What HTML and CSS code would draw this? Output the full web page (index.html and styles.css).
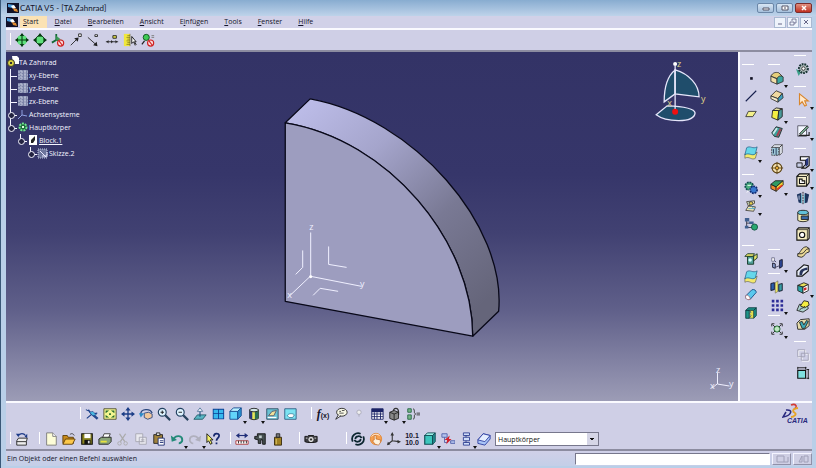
FILE: index.html
```
<!DOCTYPE html>
<html lang="de">
<head>
<meta charset="utf-8">
<meta name="viewport" content="width=device-width, initial-scale=1">
<title>CATIA V5 - [TA Zahnrad]</title>
<link rel="stylesheet" href="styles.css">
</head>
<body>
<svg class="sprite" aria-hidden="true">
  <!-- window -->
  <symbol id="app" viewBox="0 0 12 10"><path fill="#101028" d="M0 0h12v10H0z"/><path fill="#4d9fe0" d="M1 1l6 1-2 3-4-1z"/><path fill="#fff" d="M4 3l3-1 2 3-3 1z"/><path fill="#e08a30" d="M6 5l4 1 1 3-4-1z"/></symbol>
  <!-- view tools, top -->
  <symbol id="move4" viewBox="0 0 16 16"><circle cx="8" cy="8" r="6" fill="#5fe07c"/><path d="M8 1v14M1 8h14" stroke="#053a10" stroke-width="1.200"/><path fill="#053a10" d="M8 0l2.500 3.500h-5zM8 16l2.500-3.500h-5zM0 8l3.500-2.500v5zM16 8l-3.500-2.500v5z"/></symbol>
  <symbol id="rot4" viewBox="0 0 16 16"><circle cx="8" cy="8" r="5" fill="#5fe07c" stroke="#053a10"/><path fill="#053a10" d="M8 0l3 4H5zM8 16l3-4H5zM0 8l4-3v6zM16 8l-4-3v6z"/></symbol>
  <symbol id="axisno" viewBox="0 0 16 16"><path d="M6 1v7l-5 3M6 8l7 1" stroke="#146b35" stroke-width="2" fill="none"/><path fill="#3c9a58" d="M6 3l5 4-5 2z"/><circle cx="11" cy="11.500" r="3.500" fill="#fbdcdc" stroke="#d02020" stroke-width="1.300"/><path d="M9 9l4 5" stroke="#d02020" stroke-width="1.300"/></symbol>
  <symbol id="arrup" viewBox="0 0 16 16"><path d="M2 14l8-8" stroke="#222"/><path fill="#222" d="M11 5l-1 5-4-4z"/><path fill="#fff" stroke="#222" d="M11 1h3v3h-3z"/></symbol>
  <symbol id="arrdn" viewBox="0 0 16 16"><path d="M1 5l9 8" stroke="#222"/><path fill="#222" d="M12 15l-5-1 4-4z"/><path fill="#fff" stroke="#222" d="M9 2h3v2H9z"/></symbol>
  <symbol id="arrh" viewBox="0 0 16 16"><path d="M1 10h14" stroke="#222"/><path fill="#222" d="M4 8v4l-2-2zM7 8v4l2-2zM12 8v4l2-2z"/><path fill="#e4e04a" stroke="#222" d="M9 3h4v3H9z"/></symbol>
  <symbol id="ruler" viewBox="0 0 16 16"><path fill="#f0e73c" d="M1 1h7v14H1z"/><path d="M8 1v14M5 3h3M4 5h4M5 7h3M4 9h4M5 11h3M4 13h4" stroke="#66601a" stroke-width=".700"/><path fill="#fff" stroke="#111" d="M10 4v8l2-2 2 4 1-1-2-3h2z"/></symbol>
  <symbol id="pinno" viewBox="0 0 16 16"><circle cx="6" cy="5" r="3.500" fill="#3fca55" stroke="#0b4d18"/><path d="M4 9l-3 4" stroke="#222" stroke-width="1.500"/><path d="M12 3h3M12 5h3" stroke="#777"/><circle cx="11" cy="11.500" r="3.500" fill="#fbdcdc" stroke="#d02020" stroke-width="1.300"/><path d="M9 9l4 5" stroke="#d02020" stroke-width="1.300"/></symbol>
  <!-- side bars -->
  <symbol id="dot" viewBox="0 0 16 16"><path fill="#112" d="M7 7h3v3H7z"/></symbol>
  <symbol id="line" viewBox="0 0 16 16"><path d="M2 14L14 2" stroke="#16204e" stroke-width="1.300"/></symbol>
  <symbol id="plane" viewBox="0 0 16 16"><path fill="#f3f08a" stroke="#333" d="M5 5h9l-4 6H2z"/></symbol>
  <symbol id="surf" viewBox="0 0 16 16"><path fill="#f3e96c" stroke="#555" stroke-width=".700" d="M1 9c4-4 8 3 14-2l-2 7c-4 3-7-3-12 0z"/><path fill="#65d7ea" stroke="#1c5b86" stroke-width=".800" d="M3 2c4-3 7 2 12-1l-2 8c-4 3-7-2-12 1z"/></symbol>
  <symbol id="gears" viewBox="0 0 16 16"><circle cx="6" cy="6" r="4.500" fill="#4cb080" stroke="#124a50" stroke-width="2" stroke-dasharray="2 1"/><circle cx="11" cy="10" r="4" fill="#3a7ad0" stroke="#122a70" stroke-width="2" stroke-dasharray="2 1"/><path d="M4 5h4M3 13l4-3" stroke="#fff"/></symbol>
  <symbol id="scroll" viewBox="0 0 16 16"><path fill="#f2e7b4" stroke="#444" d="M3 3l9-1v3L5 8l8 1-2 5-9-1 3-5z"/><path d="M5 4l6 7M5 11h8" stroke="#4ba4c8"/><circle cx="8" cy="5" r="2" fill="#e8cf50" stroke="#444"/></symbol>
  <symbol id="treeg" viewBox="0 0 16 16"><path d="M3 3v9h6M3 7h6" stroke="#334" fill="none"/><path fill="#406090" d="M1 1h5v4H1zM6 5h5v3H6zM1 10h4v3H1z"/><circle cx="12" cy="11.500" r="3.500" fill="#28a870" stroke="#105040"/></symbol>
  <symbol id="cutbox" viewBox="0 0 16 16"><path fill="#52a098" stroke="#132" d="M4 5h7v9H4z"/><path fill="#e8e36a" stroke="#132" d="M1 5l3-3h8l-2 3zM11 5l4-3v5l-4 3z"/><circle cx="7" cy="9" r="2" fill="#dff"/></symbol>
  <symbol id="tube" viewBox="0 0 16 16"><path fill="#5ac8ee" stroke="#174a80" d="M2 9l7-7c3-1 5 1 5 3l-7 8c-3 1-6-1-5-4z"/><path fill="#fff" stroke="#b55" stroke-width=".700" d="M2 9c1-2 5 0 5 4-3 1-6-1-5-4z"/></symbol>
  <symbol id="book" viewBox="0 0 16 16"><path fill="#1f9488" stroke="#0b3a40" d="M2 5l3-3h9l-3 3z"/><path fill="#1f9488" stroke="#0b3a40" d="M2 5h4v9H2zM11 5l3-3v9l-3 3z"/><path fill="#e4dc50" stroke="#0b3a40" stroke-width=".700" d="M6 5l2 2-2 2 2 2-2 3h5V5z"/></symbol>
  <symbol id="fillet" viewBox="0 0 16 16"><path fill="#e6cf7a" stroke="#333" d="M1 6c2-4 5-5 9-4l5 5-6 2z"/><path fill="#f0dfa8" stroke="#333" d="M1 6l7 3v6l-7-3z"/><path fill="#3aa7a0" stroke="#333" d="M8 9c1-4 6-4 7-2v5l-7 3z"/></symbol>
  <symbol id="chamfer" viewBox="0 0 16 16"><path fill="#f0d9a0" stroke="#333" d="M1 8l6-6 7 3-5 6z"/><path fill="#3da0c0" stroke="#333" d="M9 11l5-6 1 5-6 5z"/><path fill="#f7ecca" stroke="#333" d="M1 8l8 3v4l-8-4z"/></symbol>
  <symbol id="draft" viewBox="0 0 16 16"><path fill="#f4ee42" stroke="#222" d="M3 4h7l-1 11-7-3z"/><path fill="#4a9a9a" stroke="#222" d="M10 4l4-2v9l-5 4z"/><path fill="#e5dfa0" stroke="#222" d="M3 4l4-3 7 1-4 2z"/></symbol>
  <symbol id="shell" viewBox="0 0 16 16"><path fill="#3b9f9a" stroke="#222" d="M2 9l5-7 7 2-4 10-5-1z"/><path fill="#a83e4e" d="M11 4l2 1-4 8-2-1z"/><path fill="#cfe6e8" d="M3 9l4-6 2 1-5 7z"/></symbol>
  <symbol id="thick" viewBox="0 0 16 16"><path fill="#9fc9d8" stroke="#333" stroke-dasharray="2 1" d="M2 5h8v9H2z"/><path fill="#e8edf4" stroke="#333" stroke-width=".800" d="M2 5l3-3h9l-3 3zM11 5l3-3v9l-3 3z"/><path d="M4 7v5M7 5v9" stroke="#235"/></symbol>
  <symbol id="target" viewBox="0 0 16 16"><circle cx="8" cy="8" r="5.500" fill="#f3dfae" stroke="#5c4314" stroke-width="1.300"/><path d="M8 1v14M1 8h14" stroke="#5c4314"/><circle cx="8" cy="8" r="2" fill="#e2a530" stroke="#5c4314"/></symbol>
  <symbol id="stack" viewBox="0 0 16 16"><path fill="#f08a30" stroke="#222" d="M1 6l6 3v5l-6-3z"/><path fill="#2f9b63" stroke="#222" d="M1 6l5-4h9l-8 7z"/><path fill="#f4de38" stroke="#222" d="M7 9l8-7v5l-8 7z"/><path d="M8 12l6-5" stroke="#e43b22" stroke-width="2"/></symbol>
  <symbol id="bodies" viewBox="0 0 16 16"><path fill="#fff" stroke="#446" stroke-width=".700" d="M2 2h3v4H2z"/><path fill="#8fa3d6" stroke="#112" d="M3 8l3 1v5l-3-1z"/><path fill="#2f4ba0" stroke="#112" d="M11 5l3-1v8l-3 2z"/><path d="M6 13l5-2M5 5l2 2" stroke="#446"/></symbol>
  <symbol id="mirror" viewBox="0 0 16 16"><path fill="#2c5fae" stroke="#112" d="M1 4l4-1v8l-4 1z"/><path fill="#f2ea60" stroke="#555" stroke-width=".600" d="M6 3l3-2v12l-3 2z"/><path fill="#3a9fa6" stroke="#112" d="M10 5l4-1v8l-4 1z"/></symbol>
  <symbol id="grid9" viewBox="0 0 16 16"><path fill="#2c2c96" d="M2 2h3v3H2zM7 2h3v3H7zM12 2h3v3h-3zM2 7h3v3H2zM7 7h3v3H7zM12 7h3v3h-3zM2 12h3v3H2zM7 12h3v3H7zM12 12h3v3h-3z"/></symbol>
  <symbol id="scale" viewBox="0 0 16 16"><circle cx="8" cy="8" r="3.500" fill="#bfe8c4" stroke="#162"/><path d="M2 5V2h3M11 2h3v3M14 11v3h-3M5 14H2v-3M3 3l3 3M13 3l-3 3M13 13l-3-3M3 13l3-3" fill="none" stroke="#222"/></symbol>
  <symbol id="gear" viewBox="0 0 16 16"><path fill="#3ba08a" d="M0 8l6 3-3 5z"/><circle cx="8.500" cy="7.500" r="5" fill="#b7c4c4" stroke="#1b3636" stroke-width="2.500" stroke-dasharray="2 1"/><circle cx="8.500" cy="7.500" r="2" fill="#fff" stroke="#222"/></symbol>
  <symbol id="pointer" viewBox="0 0 16 16"><path fill="#ffe9cc" stroke="#d8852c" stroke-width="1.300" d="M4 1v12l3-3 3 5 2-1-2-5h4z"/></symbol>
  <symbol id="sketch" viewBox="0 0 16 16"><path fill="#f2f6ff" stroke="#334" stroke-width=".800" d="M2 2h10v12H2z"/><path d="M4 11l9-9 1 2-8 8z" fill="#80b89c" stroke="#222"/><path d="M3 13h12V9" fill="none" stroke="#222" stroke-width="1.300"/></symbol>
  <symbol id="pad" viewBox="0 0 16 16"><path fill="#fff" stroke="#111" stroke-width="1.300" d="M5 2h10v10l-4 3H7l4-4V6H5z"/><path fill="#27357e" d="M11 5l3-2v8l-3 3z"/><path fill="#c9cfe8" stroke="#111" d="M1 9h6v5H1z"/></symbol>
  <symbol id="pocket" viewBox="0 0 16 16"><path fill="#f1e9c6" stroke="#111" stroke-width="1.300" d="M1 4l3-3h11v10l-3 4H1z"/><path d="M1 4h11v11M12 4l3-3" fill="none" stroke="#111"/><path fill="#fff" stroke="#111" stroke-width="1.200" d="M4 12V7h3v2h3v3z"/></symbol>
  <symbol id="shaft" viewBox="0 0 16 16"><path fill="#1d335e" d="M1 4l5-2v12l-3-1zM10 2l5 2-2 9-3 1z"/><path fill="#5ab1c3" d="M6 4h1v10H6zM9 4h1v10H9z"/><path fill="#c8d4ec" d="M3 5h1v5H3z"/><path d="M8 1v14" stroke="#111" stroke-dasharray="2 1"/></symbol>
  <symbol id="groove" viewBox="0 0 16 16"><path fill="#f4ecb2" stroke="#222" d="M2 4v9c2 2 10 2 12 0V4z"/><ellipse cx="8" cy="4" rx="6" ry="2.500" fill="#62c1da" stroke="#222"/><path fill="#3b69a7" stroke="#222" d="M6 8h8v4H6z"/></symbol>
  <symbol id="hole" viewBox="0 0 16 16"><path fill="#f4ecc0" stroke="#111" stroke-width="1.300" d="M1 3l2-2h12v12l-2 2H1z"/><path d="M1 3h12v12M13 3l2-2" fill="none" stroke="#111" stroke-width=".800"/><circle cx="7" cy="9" r="3" fill="#fff" stroke="#111" stroke-width="1.300"/></symbol>
  <symbol id="rib" viewBox="0 0 16 16"><path fill="#e9d797" stroke="#222" d="M2 10c3 0 4-8 10-8l3 2v4c-5 0-5 6-9 6l-4-1z"/><path fill="none" stroke="#222" d="M2 10h4c4 0 4-6 9-6"/></symbol>
  <symbol id="slot" viewBox="0 0 16 16"><path fill="#e8ecf5" stroke="#111" stroke-width="1.300" d="M1 9l8-7 5 1v6l-7 6H1z"/><path fill="#28345c" d="M4 12c0-5 4-6 9-7v3c-4 0-6 2-6 6H4z"/></symbol>
  <symbol id="cube3" viewBox="0 0 16 16"><path fill="#e7e05a" stroke="#222" d="M2 5l7-3 5 2-6 3z"/><path fill="#2ba6a8" stroke="#222" d="M2 5l6 2v7l-6-3z"/><path fill="#fff" stroke="#222" d="M8 7l6-3v7l-6 3z"/><path fill="#d02a2a" d="M9 8l3-1v3l-3 1z"/></symbol>
  <symbol id="loft" viewBox="0 0 16 16"><path fill="#aed1cf" stroke="#222" d="M1 13l3-7 9 1 1 4-6 4z"/><path fill="#f6ee42" stroke="#222" d="M5 8l4-6 5 1 1 4-5 3z"/><path d="M4 13c2-4 4-1 6-5" stroke="#222" fill="none"/></symbol>
  <symbol id="loft2" viewBox="0 0 16 16"><path fill="#e6dcab" stroke="#222" d="M1 7l4-4 10-1v8l-5 4H2z"/><path fill="#3da9b5" stroke="#222" d="M4 6l3-1 2 4 3-5 2 1-4 8H7z"/></symbol>
  <symbol id="ghost" viewBox="0 0 16 16"><path fill="none" stroke="#fff" d="M3 3h8v4h4v8H7v-4H3z"/><path fill="none" stroke="#a0a0b4" d="M2 2h8v8H2zM6 6h8v8H6z"/></symbol>
  <symbol id="dim" viewBox="0 0 16 16"><path fill="#7fe0e0" stroke="#111" stroke-width="1.300" d="M2 5h9v9H2z"/><path d="M14 4v11M12 4h3M12 14h3M2 2h10M2 1v3M11 1v3" stroke="#111"/></symbol>
  <!-- bottom, row 1 -->
  <symbol id="fly" viewBox="0 0 16 16"><path d="M1 3l4 2 4 3 6 5M2 13l6-5 6-1M8 9l6 5M4 3l3 5" fill="none" stroke="#173c86" stroke-width="1.200"/><path fill="#4bb8e0" stroke="#173c86" stroke-width=".700" d="M5 6l4-1 4 4-4 1z"/></symbol>
  <symbol id="fit" viewBox="0 0 16 16"><path fill="#f4f590" stroke="#4b4b2c" d="M1 2h14v12H1z"/><path fill="#246b2c" d="M3 4h4L3 7zM13 4v3L9 4zM13 12H9l4-3zM3 12V9l4 3zM7 7h2v2H7z"/></symbol>
  <symbol id="pan" viewBox="0 0 16 16"><path d="M8 3v10M3 8h10" stroke="#1b3d86" stroke-width="1.500"/><path fill="#1b3d86" d="M8 0l3 4H5zM8 16l3-4H5zM0 8l4-3v6zM16 8l-4-3v6z"/></symbol>
  <symbol id="rotate" viewBox="0 0 16 16"><path fill="none" stroke="#2b477e" stroke-width="1.500" d="M2 8c0-6 11-7 13-1"/><path fill="#f1c79b" stroke="#2b477e" d="M6 7l5-1 4 2v4l-5 2-4-2z"/><path fill="#2b8cc9" d="M0 7l6 0-4 5z"/></symbol>
  <symbol id="zin" viewBox="0 0 16 16"><path d="M9 9l6 6" stroke="#29445f" stroke-width="2.500"/><circle cx="6" cy="6" r="4.500" fill="#dff4ff" stroke="#224060" stroke-width="1.300"/><path d="M4 6h4M6 4v4" stroke="#111"/></symbol>
  <symbol id="zout" viewBox="0 0 16 16"><path d="M9 9l6 6" stroke="#29445f" stroke-width="2.500"/><circle cx="6" cy="6" r="4.500" fill="#dff4ff" stroke="#224060" stroke-width="1.300"/><path d="M4 6h4" stroke="#111"/></symbol>
  <symbol id="normal" viewBox="0 0 16 16"><path fill="#5ab7c4" stroke="#205866" d="M5 9h10l-4 5H1z"/><path d="M8 11V4" stroke="#174a78" stroke-width="1.200"/><path fill="#fff" stroke="#174a78" stroke-width=".700" d="M8 1l3 4H5z"/></symbol>
  <symbol id="quad" viewBox="0 0 16 16"><path fill="#0d3d90" d="M2 2h13v12H2z"/><path fill="#36b8ee" d="M3 3h5v4H3zM9 3h5v4H9zM3 8h5v5H3zM9 8h5v5H9z"/></symbol>
  <symbol id="cube" viewBox="0 0 16 16"><path fill="#62d5fa" stroke="#124a90" d="M1 5h9v9H1z"/><path fill="#b9f0ff" stroke="#124a90" d="M1 5l4-4h9l-4 4z"/><path fill="#2a92d0" stroke="#124a90" d="M10 5l4-4v9l-4 4z"/></symbol>
  <symbol id="shade" viewBox="0 0 16 16"><path fill="#e6e65a" stroke="#222" d="M3 3v10c2 2 8 2 10 0V3z"/><path fill="#2b6e54" d="M9 4h4v9l-4 1z"/><path fill="#27357e" d="M3 4h3v10l-3-1z"/><ellipse cx="8" cy="3.500" rx="5" ry="2" fill="#d4e8e8" stroke="#222"/></symbol>
  <symbol id="hide" viewBox="0 0 16 16"><path fill="#69c2d4" stroke="#2a4b60" d="M2 2h13v12H2z"/><path fill="#f0e19a" stroke="#556" d="M4 10l4-5 5-1-3 6z"/><path d="M3 12h10" stroke="#fff" stroke-width="1.500"/></symbol>
  <symbol id="swap" viewBox="0 0 16 16"><path fill="#7ce2f2" stroke="#2a5b80" d="M2 2h13v12H2z"/><path fill="#fff" stroke="#25688a" stroke-width=".800" d="M5 10c1-3 6-3 8-1l-2 3H7z"/></symbol>
  <symbol id="bubble" viewBox="0 0 16 16"><ellipse cx="9" cy="6" rx="6" ry="4.500" fill="#f6f6e4" stroke="#222"/><path d="M5 9l-3 5 6-4" fill="#fff" stroke="#222"/><path d="M6 5h2M9 4h3M6 7h5" stroke="#444"/></symbol>
  <symbol id="ghostdot" viewBox="0 0 16 16"><circle cx="8" cy="6" r="2.500" fill="#eee" stroke="#a8a8b8"/><path d="M8 8v3" stroke="#a8a8b8"/></symbol>
  <symbol id="table" viewBox="0 0 16 16"><path fill="#fff" stroke="#1a2266" d="M2 2h13v12H2z"/><path fill="#1a2266" d="M2 2h13v4H2z"/><path d="M5 6v8M8 6v8M12 6v8M2 8h13M2 11h13" stroke="#1a2266"/></symbol>
  <symbol id="lock" viewBox="0 0 16 16"><path fill="none" stroke="#333" stroke-width="1.500" d="M6 6c0-6 6-6 6 0v3"/><path fill="#888" stroke="#222" d="M2 6l5-2 5 2v7l-5 2-5-2z"/><path d="M7 8v7M2 6l5 2 5-2" stroke="#222" fill="none"/></symbol>
  <symbol id="brace" viewBox="0 0 16 16"><path fill="#79b589" stroke="#264" d="M2 2h4v4H2zM2 9h4v5H2z"/><path d="M8 2c3 0 0 5 3 6-3 1 0 6-3 6M12 7h4M12 9h4" fill="none" stroke="#333"/></symbol>
  <!-- bottom, row 2 -->
  <symbol id="printarr" viewBox="0 0 16 16"><path d="M4 4c2-3 6-3 8 0" fill="none" stroke="#1c3a88" stroke-width="1.500"/><path fill="#1c3a88" d="M1 2l4 0-1 4zM14 2l-3 3 3 2z"/><path fill="#eee" stroke="#222" d="M2 10l2-3h10l-1 4v4H2z"/><path d="M2 11h11" stroke="#222"/></symbol>
  <symbol id="new" viewBox="0 0 16 16"><path fill="#fdfdd8" stroke="#777" d="M3 1h7l4 4v10H3z"/><path fill="#fff" stroke="#777" d="M10 1v4h4"/></symbol>
  <symbol id="open" viewBox="0 0 16 16"><path fill="#c98a1a" stroke="#5b3d08" d="M1 4h5l1 2h6v7H1z"/><path fill="#fcc84a" stroke="#5b3d08" d="M4 8h11l-3 6H1z"/><path d="M9 3c2-2 4-1 5 1" fill="none" stroke="#333"/></symbol>
  <symbol id="save" viewBox="0 0 16 16"><path fill="#8a8420" stroke="#111" stroke-width="1.300" d="M2 2h12v12H2z"/><path fill="#fff" d="M5 2h7v5H5z"/><path fill="#111" d="M5 9h7v5H5z"/><path fill="#ddd" d="M9 10h2v3H9z"/></symbol>
  <symbol id="print" viewBox="0 0 16 16"><path fill="#fff" stroke="#333" d="M5 7l2-5h7l-2 5z"/><path fill="#8aa47a" stroke="#222" d="M1 8l3-2h11v5l-3 3H1z"/><path fill="#e7e23d" d="M3 10h7v2H3z"/></symbol>
  <symbol id="cut" viewBox="0 0 16 16"><path d="M4 2l6 9M11 2L5 11" stroke="#aaa" stroke-width="1.500"/><circle cx="4" cy="13" r="2" fill="none" stroke="#aaa"/><circle cx="11" cy="13" r="2" fill="none" stroke="#aaa"/></symbol>
  <symbol id="copy" viewBox="0 0 16 16"><path fill="#e9e9ef" stroke="#a5a5b0" d="M2 2h8v9H2zM6 6h8v8H6z"/><path d="M8 9h4M8 11h4" stroke="#a5a5b0"/></symbol>
  <symbol id="paste" viewBox="0 0 16 16"><path fill="#a0823c" stroke="#222" d="M2 3h10v10H2z"/><path fill="#ddd" stroke="#222" d="M5 1h4v3H5z"/><path fill="#fff" stroke="#1a2a70" d="M7 7h7v8H7z"/><path d="M9 10h4M9 12h4" stroke="#1a2a70"/></symbol>
  <symbol id="undo" viewBox="0 0 16 16"><path fill="none" stroke="#238a78" stroke-width="2.200" d="M4 8c3-5 10-4 10 1 0 2-2 4-4 4"/><path fill="#238a78" d="M1 4l1 7 6-2z"/></symbol>
  <symbol id="redo" viewBox="0 0 16 16"><path fill="none" stroke="#b0b0bd" stroke-width="2" d="M12 8C9 3 2 4 2 9c0 2 2 4 4 4"/><path fill="#b0b0bd" d="M15 4l-1 7-6-2z"/></symbol>
  <symbol id="help" viewBox="0 0 16 16"><path fill="#f5f06a" stroke="#111" d="M1 2v10l2-2 2 4 2-1-2-4h3z"/><path fill="none" stroke="#17286e" stroke-width="2" d="M9 5c0-4 6-4 6-1s-3 3-3 6"/><path fill="#17286e" d="M11 12h2v2h-2z"/></symbol>
  <symbol id="measure" viewBox="0 0 16 16"><path d="M3 4h11" stroke="#1f2e78" stroke-width="1.300"/><path fill="#1f2e78" d="M1 4l4-3v6zM15 4l-4-3v6z"/><path fill="#fff" stroke="#a33" d="M1 10h14v4H1z"/><path d="M4 10v3M7 10v3M10 10v3M13 10v3" stroke="#222"/></symbol>
  <symbol id="caliper" viewBox="0 0 16 16"><path fill="#465050" stroke="#111" d="M5 2h9v12h-3V9H9v4H6V9L2 8V5h3z"/><path fill="#c4d0d0" d="M7 4h3v3H7z"/></symbol>
  <symbol id="weight" viewBox="0 0 16 16"><path fill="#a08125" stroke="#33270a" d="M4 6h8v9H4z"/><path fill="#777" stroke="#222" d="M6 2h4v4H6z"/><path d="M6 8v6" stroke="#e2cd70"/></symbol>
  <symbol id="camera" viewBox="0 0 16 16"><path fill="#3c3c40" stroke="#111" d="M1 5h3l1-1h6l1 1h3v6l-3 1H4l-3-1z"/><circle cx="8" cy="8.500" r="2.500" fill="#bbb" stroke="#eee"/><circle cx="8" cy="8.500" r="1" fill="#111"/><path d="M2 7h2M12 7h2" stroke="#ddd"/></symbol>
  <symbol id="swirl" viewBox="0 0 16 16"><path fill="none" stroke="#0c2630" stroke-width="2" d="M2 11C-1 4 6 0 11 2M14 5c3 7-4 11-9 9M5 8c0-4 6-4 7-1M11 8c0 4-6 4-7 1"/></symbol>
  <symbol id="hand" viewBox="0 0 16 16"><circle cx="8" cy="8" r="6.500" fill="#f6a050" stroke="#e08838"/><path fill="#fff2dc" stroke="#b8601c" stroke-width=".700" d="M7 14L4 10l2-1V4l2 0v4l5 1v3l-2 3z"/><path d="M3 5c2-3 7-3 9-1" fill="none" stroke="#fff"/></symbol>
  <symbol id="axes" viewBox="0 0 16 16"><path d="M6 2v8l8 1M6 10l-5 4" fill="none" stroke="#333" stroke-width="1.200"/><path fill="#333" d="M6 0l2 4H4zM16 11l-4 2V9zM0 15l1-4 3 3z"/></symbol>
  <symbol id="solid" viewBox="0 0 16 16"><path fill="#3cc5bc" stroke="#0f4b52" stroke-width="1.300" d="M2 4h9v10H2z"/><path fill="#9deee6" stroke="#0f4b52" d="M2 4l3-3h9l-3 3z"/><path fill="#258e90" stroke="#0f4b52" d="M11 4l3-3v10l-3 3z"/></symbol>
  <symbol id="bolt" viewBox="0 0 16 16"><path fill="#b5c3ee" stroke="#5060a8" d="M1 2h6v4H1zM11 10h5v3h-5z"/><path d="M4 6v6h3" stroke="#5060a8" fill="none"/><path fill="#d01f2c" d="M10 4L4 9h3l-1 5 6-6H9z"/></symbol>
  <symbol id="chain" viewBox="0 0 16 16"><path fill="#cfdcf8" stroke="#2a3c90" d="M5 1h7v3H5zM5 6h7v4H5zM5 12h7v3H5z"/><path d="M8 4v2M8 10v2" stroke="#2a3c90"/></symbol>
  <symbol id="slab" viewBox="0 0 16 16"><path fill="#a9c4f6" stroke="#2a3ca0" d="M1 9l6-7 8 2v4l-6 7-8-2z"/><path fill="#e4edff" stroke="#2a3ca0" d="M1 9l6-7 8 2-6 7z"/></symbol>
  <!-- tree -->
  <symbol id="t-plane" viewBox="0 0 12 12"><path fill="#7d85a8" d="M1 1h10v10H1z"/><path d="M1 3h10M1 6h10M1 9h10M4 1v10M8 1v10" stroke="#c3c8dc" stroke-dasharray="2 1"/></symbol>
</svg>

<div class="window">
  <header class="titlebar">
    <svg class="app-icon"><use href="#app"/></svg>
    <h1>CATIA V5 - [TA Zahnrad]</h1>
    <div class="caption">
      <button aria-label="Minimieren"><svg viewBox="0 0 10 8"><path d="M2 4h6v2H2z" fill="#fff" stroke="#556"/></svg></button>
      <button aria-label="Wiederherstellen"><svg viewBox="0 0 10 8"><path d="M2 2h6v4H2z" fill="#fff" stroke="#556"/><path d="M4 4h2" stroke="#556"/></svg></button>
      <button class="close" aria-label="Schließen"><svg viewBox="0 0 10 8"><path d="M3 2l4 4M7 2L3 6" stroke="#fff" stroke-width="1.500"/></svg></button>
    </div>
  </header>

  <nav class="menubar">
    <svg class="app-icon"><use href="#app"/></svg>
    <button class="active"><u>S</u>tart</button>
    <button><u>D</u>atei</button>
    <button><u>B</u>earbeiten</button>
    <button><u>A</u>nsicht</button>
    <button>E<u>i</u>nfügen</button>
    <button><u>T</u>ools</button>
    <button><u>F</u>enster</button>
    <button><u>H</u>ilfe</button>
    <div class="mdi">
      <button aria-label="Dokument minimieren"><svg viewBox="0 0 10 8"><path d="M3 6h4" stroke="#668"/></svg></button>
      <button aria-label="Dokument wiederherstellen"><svg viewBox="0 0 10 8"><path d="M2 4h4v3H2zM4 3V1h4v4H6" fill="none" stroke="#668" stroke-width=".800"/></svg></button>
      <button aria-label="Dokument schließen"><svg viewBox="0 0 10 8"><path d="M3 2l4 4M7 2L3 6" stroke="#668"/></svg></button>
    </div>
  </nav>

  <div class="toolbar top">
    <div class="group">
      <button class="tool" title="Verschieben"><svg><use href="#move4"/></svg></button>
      <button class="tool" title="Drehen"><svg><use href="#rot4"/></svg></button>
      <button class="tool" title="Achse aus"><svg><use href="#axisno"/></svg></button>
      <button class="tool" title="Nach oben"><svg><use href="#arrup"/></svg></button>
      <button class="tool" title="Nach unten"><svg><use href="#arrdn"/></svg></button>
      <button class="tool" title="Abstand"><svg><use href="#arrh"/></svg></button>
      <button class="tool" title="Lineal"><svg><use href="#ruler"/></svg></button>
      <button class="tool" title="Fixieren aus"><svg><use href="#pinno"/></svg></button>
    </div>
  </div>

  <main class="work">
    <section class="viewport">
      <svg class="scene" viewBox="0 0 732 350" preserveAspectRatio="xMidYMin meet" role="img" aria-label="Block.1">
        <defs>
          <linearGradient id="rim" gradientUnits="userSpaceOnUse" x1="300" y1="50" x2="480" y2="250">
            <stop offset="0" stop-color="#bcbce8"/>
            <stop offset=".300" stop-color="#a5a5cc"/>
            <stop offset=".650" stop-color="#797994"/>
            <stop offset="1" stop-color="#65657a"/>
          </linearGradient>
        </defs>
        <g stroke="#080818" stroke-width="1.300" stroke-linejoin="round">
          <path fill="url(#rim)" d="M279 71L304 47C408 66 501 174 493 260L467 285C467 190 383 88 279 71z"/>
          <path fill="#9d9dbf" d="M279 71C383 88 467 190 467 285L279 250z"/>
        </g>
        <!-- origin planes and axes -->
        <g fill="none" stroke="#f0f0ff">
          <path d="M304.500 181v44l51 10M304 225l-20 19"/>
          <path d="M322.500 195v18l18 3M296.500 199v17l-7 7M307 244l7-7 18 3"/>
        </g>
        <circle cx="304.500" cy="225.500" r="1.500" fill="#fff"/>
        <g class="axis"><text x="303" y="179">z</text><text x="354" y="236">y</text><text x="281" y="247">x</text></g>
        <!-- compass -->
        <g fill="#1f4d6b" stroke="#e6e6fa" stroke-width="1.300">
          <path d="M670 18C661 25 659 38 659 50L670 42z"/>
          <path d="M670 18C684 22 694 33 694 45L670 42z"/>
          <path d="M651 63L662 54Q689 55 690 61C689 72 660 70 651 63z"/>
          <path d="M670 14v45"/>
        </g>
        <circle cx="670" cy="12" r="2" fill="#fff"/>
        <circle cx="670" cy="60" r="3" fill="#f01010"/>
        <g class="compass"><text x="672" y="15">z</text><text x="696" y="50">y</text><text x="662" y="54">x</text></g>
        <!-- view axis -->
        <path d="M712.500 322v11l12 2M712 333l-5 4" fill="none" stroke="#f0f0ff"/>
        <g class="axis"><text x="711" y="322">z</text><text x="724" y="336">y</text><text x="705" y="338">x</text></g>
      </svg>

      <ul class="tree">
        <li><svg viewBox="0 0 12 12"><path fill="#fff" d="M5 0h5l2 2v6H6z"/><circle cx="4" cy="7" r="3.500" fill="#d8d040" stroke="#333"/><path fill="#333" d="M3 6h2v2H3z"/></svg><span>TA Zahnrad</span>
          <ul>
            <li class="leaf"><svg><use href="#t-plane"/></svg><span>xy-Ebene</span></li>
            <li class="leaf"><svg><use href="#t-plane"/></svg><span>yz-Ebene</span></li>
            <li class="leaf"><svg><use href="#t-plane"/></svg><span>zx-Ebene</span></li>
            <li class="node"><svg viewBox="0 0 12 12"><path d="M5 2v5l5 1M5 7l-4 4" fill="none" stroke="#8f9fe0"/></svg><span>Achsensysteme</span></li>
            <li class="node"><svg viewBox="0 0 12 12"><circle cx="6" cy="6" r="3.500" fill="#1e6b3a" stroke="#6fe690" stroke-width="2" stroke-dasharray="2 1"/><path fill="#dfffe4" d="M5 5h2v2H5z"/></svg><span>Hauptkörper</span>
              <ul>
                <li class="node"><svg viewBox="0 0 12 12"><path fill="#fff" d="M2 1h8v10H2z"/><path fill="#222" d="M4 6l4-4v4L6 9H4z"/></svg><span class="current">Block.1</span>
                  <ul>
                    <li class="node"><svg viewBox="0 0 12 12"><path fill="#6d759c" stroke="#c6cbe4" stroke-dasharray="1 1" d="M1 2h9v9H1z"/><path d="M3 4l6 6M5 9h5V5" stroke="#e8e8ff" fill="none"/></svg><span>Skizze.2</span></li>
                  </ul>
                </li>
              </ul>
            </li>
          </ul>
        </li>
      </ul>
    </section>

    <aside class="side">
      <div class="column">
        <div class="group">
          <button class="tool" title="Punkt"><svg><use href="#dot"/></svg></button>
          <button class="tool" title="Linie"><svg><use href="#line"/></svg></button>
          <button class="tool" title="Ebene"><svg><use href="#plane"/></svg></button>
        </div>
        <div class="group gap-l">
          <button class="tool more" title="Flächen"><svg><use href="#surf"/></svg></button>
        </div>
        <div class="group gap-m">
          <button class="tool more" title="Boolesche Operationen"><svg><use href="#gears"/></svg></button>
          <button class="tool more" title="Zusammenbauen"><svg><use href="#scroll"/></svg></button>
          <button class="tool" title="Körper einfügen"><svg><use href="#treeg"/></svg></button>
        </div>
        <div class="group gap-m">
          <button class="tool" title="Trennen"><svg><use href="#cutbox"/></svg></button>
          <button class="tool" title="Aufmaßfläche"><svg><use href="#surf"/></svg></button>
          <button class="tool" title="Fläche schließen"><svg><use href="#tube"/></svg></button>
          <button class="tool" title="Fläche integrieren"><svg><use href="#book"/></svg></button>
        </div>
      </div>

      <div class="column">
        <div class="group">
          <button class="tool more" title="Kantenverrundung"><svg><use href="#fillet"/></svg></button>
          <button class="tool" title="Fase"><svg><use href="#chamfer"/></svg></button>
          <button class="tool more" title="Auszugsschräge"><svg><use href="#draft"/></svg></button>
          <button class="tool" title="Schalenelement"><svg><use href="#shell"/></svg></button>
          <button class="tool" title="Aufmaß"><svg><use href="#thick"/></svg></button>
          <button class="tool" title="Gewinde"><svg><use href="#target"/></svg></button>
          <button class="tool more" title="Teilfläche entfernen"><svg><use href="#stack"/></svg></button>
        </div>
        <div class="group gap-xl">
          <button class="tool more" title="Verschiebung"><svg><use href="#bodies"/></svg></button>
        </div>
        <div class="group gap-xs">
          <button class="tool" title="Spiegeln"><svg><use href="#mirror"/></svg></button>
          <button class="tool more" title="Rechteckmuster"><svg><use href="#grid9"/></svg></button>
        </div>
        <div class="group gap-xs">
          <button class="tool more" title="Skalieren"><svg><use href="#scale"/></svg></button>
        </div>
      </div>

      <div class="column high">
        <div class="group">
          <button class="tool" title="Part Design"><svg><use href="#gear"/></svg></button>
        </div>
        <div class="group gap-s">
          <button class="tool more" title="Auswählen"><svg><use href="#pointer"/></svg></button>
        </div>
        <div class="group gap-s">
          <button class="tool more" title="Skizze"><svg><use href="#sketch"/></svg></button>
        </div>
        <div class="group gap-s">
          <button class="tool more" title="Block"><svg><use href="#pad"/></svg></button>
          <button class="tool more" title="Tasche"><svg><use href="#pocket"/></svg></button>
          <button class="tool" title="Welle"><svg><use href="#shaft"/></svg></button>
          <button class="tool" title="Nut"><svg><use href="#groove"/></svg></button>
          <button class="tool" title="Bohrung"><svg><use href="#hole"/></svg></button>
          <button class="tool" title="Rippe"><svg><use href="#rib"/></svg></button>
          <button class="tool" title="Rille"><svg><use href="#slot"/></svg></button>
          <button class="tool more" title="Versteifung"><svg><use href="#cube3"/></svg></button>
          <button class="tool" title="Loft"><svg><use href="#loft"/></svg></button>
          <button class="tool" title="Entfernter Loft"><svg><use href="#loft2"/></svg></button>
        </div>
        <div class="group gap-s">
          <button class="tool" title="Bedingungen im Dialog" disabled><svg><use href="#ghost"/></svg></button>
          <button class="tool" title="Bedingung"><svg><use href="#dim"/></svg></button>
        </div>
      </div>
    </aside>
  </main>

  <footer class="bottom">
    <div class="toolbar view">
      <div class="group">
        <button class="tool" title="Flugmodus"><svg><use href="#fly"/></svg></button>
        <button class="tool" title="Alles einpassen"><svg><use href="#fit"/></svg></button>
        <button class="tool" title="Schwenken"><svg><use href="#pan"/></svg></button>
        <button class="tool" title="Ansicht drehen"><svg><use href="#rotate"/></svg></button>
        <button class="tool" title="Vergrößern"><svg><use href="#zin"/></svg></button>
        <button class="tool" title="Verkleinern"><svg><use href="#zout"/></svg></button>
        <button class="tool" title="Senkrechte Ansicht"><svg><use href="#normal"/></svg></button>
        <button class="tool" title="Mehrfachansicht"><svg><use href="#quad"/></svg></button>
        <button class="tool more" title="Isometrische Ansicht"><svg><use href="#cube"/></svg></button>
        <button class="tool more" title="Schattierung"><svg><use href="#shade"/></svg></button>
        <button class="tool" title="Verdecken/Anzeigen"><svg><use href="#hide"/></svg></button>
        <button class="tool" title="Sichtbaren Raum umschalten"><svg><use href="#swap"/></svg></button>
      </div>
      <div class="group gap-m">
        <button class="tool fx" title="Formel"><i>f</i>(x)</button>
        <button class="tool" title="Kommentar"><svg><use href="#bubble"/></svg></button>
        <button class="tool" title="Link" disabled><svg><use href="#ghostdot"/></svg></button>
        <button class="tool more" title="Konstruktionstabelle"><svg><use href="#table"/></svg></button>
        <button class="tool more" title="Sperren"><svg><use href="#lock"/></svg></button>
        <button class="tool" title="Äquivalente Bemaßungen"><svg><use href="#brace"/></svg></button>
      </div>
      <svg class="logo" viewBox="0 0 30 22" role="img" aria-label="CATIA">
        <path d="M9 2c5-2 7 2 3 4" fill="none" stroke="#d23a34" stroke-width="1.500"/>
        <path d="M4 7c8-1 5 6-3 7l3-5" fill="none" stroke="#29297e" stroke-width="1.500"/>
        <path d="M16 5c-7 1-5 4-3 5s-1 4-4 4" fill="none" stroke="#e6a426" stroke-width="1.800"/>
        <text x="5" y="20">CATIA</text>
      </svg>
    </div>
    <div class="toolbar standard">
      <div class="group">
        <button class="tool" title="Schnelldruck"><svg><use href="#printarr"/></svg></button>
      </div>
      <div class="group gap-s">
        <button class="tool" title="Neu"><svg><use href="#new"/></svg></button>
        <button class="tool" title="Öffnen"><svg><use href="#open"/></svg></button>
        <button class="tool" title="Sichern"><svg><use href="#save"/></svg></button>
        <button class="tool" title="Drucken"><svg><use href="#print"/></svg></button>
        <button class="tool" title="Ausschneiden" disabled><svg><use href="#cut"/></svg></button>
        <button class="tool" title="Kopieren" disabled><svg><use href="#copy"/></svg></button>
        <button class="tool" title="Einfügen"><svg><use href="#paste"/></svg></button>
        <button class="tool more" title="Widerrufen"><svg><use href="#undo"/></svg></button>
        <button class="tool more" title="Wiederholen" disabled><svg><use href="#redo"/></svg></button>
        <button class="tool" title="Direkthilfe"><svg><use href="#help"/></svg></button>
      </div>
      <div class="group gap-s">
        <button class="tool" title="Messen zwischen"><svg><use href="#measure"/></svg></button>
        <button class="tool" title="Element messen"><svg><use href="#caliper"/></svg></button>
        <button class="tool" title="Trägheit messen"><svg><use href="#weight"/></svg></button>
      </div>
      <div class="group gap-m">
        <button class="tool" title="Bild erfassen"><svg><use href="#camera"/></svg></button>
      </div>
      <div class="group gap-xl">
        <button class="tool" title="Aktualisieren"><svg><use href="#swirl"/></svg></button>
        <button class="tool" title="Manuell aktualisieren"><svg><use href="#hand"/></svg></button>
        <button class="tool" title="Achsensystem"><svg><use href="#axes"/></svg></button>
        <button class="tool num" title="Mittlere Bemaßungen">10.1<br>10.0</button>
        <button class="tool more" title="Nur aktueller Körper"><svg><use href="#solid"/></svg></button>
        <button class="tool" title="Katalog"><svg><use href="#bolt"/></svg></button>
        <button class="tool more" title="Struktur"><svg><use href="#chain"/></svg></button>
        <button class="tool" title="Körper"><svg><use href="#slab"/></svg></button>
        <select aria-label="Objekt in Bearbeitung"><option>Hauptkörper</option></select>
      </div>
    </div>
  </footer>

  <div class="status">
    <label for="cmd">Ein Objekt oder einen Befehl auswählen</label>
    <input id="cmd" type="text">
    <button aria-label="Dialog" disabled><svg viewBox="0 0 16 10"><path d="M3 2h7v6H3zM10 8h4V3" fill="none" stroke="#a0a0b8"/></svg></button>
    <button aria-label="Hilfe" disabled><svg viewBox="0 0 16 10"><path d="M4 8l3-6v6zM9 2h4v6H9z" fill="none" stroke="#a0a0b8"/></svg></button>
  </div>
</div>
</body>
</html>
```
FILE: styles.css
```
* {
  box-sizing: border-box;
}
body {
  margin: 0;
  font-family: "Open Sans", "Noto Sans", sans-serif;
  font-size: 7px;
  color: #14142a;
  background: #b9cfe8;
}
button {
  margin: 0;
  padding: 0;
  border: 0;
  background: none;
  font: inherit;
  color: inherit;
}
.sprite {
  position: absolute;
  width: 0;
  height: 0;
}
.window {
  display: flex;
  flex-direction: column;
  height: 100vh;
  padding: 0 4px 2px 5px;
  border-left: 1px solid #3a5878;
  background: #b9cfe8;
}

/* title and menu */
.titlebar {
  display: flex;
  align-items: center;
  height: 16px;
  margin: 0 -4px 0 -5px;
  padding: 0 4px 0 6px;
  background: linear-gradient(#88acd0, #bed3ea);
}
.titlebar h1 {
  flex: 1;
  margin: 0 0 0 1px;
  font-family: Lato, "Open Sans", sans-serif;
  font-size: 8px;
  font-weight: 400;
}
.app-icon {
  width: 12px;
  height: 10px;
}
.caption,
.mdi {
  display: flex;
  gap: 2px;
}
.caption button {
  width: 17px;
  height: 10px;
  border: 1px solid #6b87a8;
  border-radius: 2px;
  background: linear-gradient(#d8e6f4, #a5bfdb);
}
.caption .close {
  border-color: #7a2c2c;
  background: linear-gradient(#e09080, #c03020);
}
.caption svg,
.mdi svg {
  display: block;
  width: 10px;
  height: 8px;
  margin: 0 auto;
}
.menubar {
  display: flex;
  align-items: center;
  height: 12px;
  background: #d1d1e8;
}
.menubar > button {
  height: 12px;
  padding: 0 8px;
  line-height: 12px;
}
.menubar .active {
  margin-left: 2px;
  padding-left: 3px;
  background: #fbe2b4;
}
.mdi {
  margin-left: auto;
  gap: 1px;
}
.mdi button {
  width: 12px;
  height: 11px;
  border: 1px solid #a9b9d2;
  background: #eef3fb;
}

/* toolbars */
.toolbar {
  display: flex;
  align-items: center;
  background: #cfcfe6;
}
.toolbar .group {
  display: flex;
  align-items: center;
  padding-left: 3px;
  background: linear-gradient(#fff, #fff) 0 2px / 1px 12px no-repeat;
}
.tool {
  position: relative;
  flex: none;
  width: 18px;
  height: 18px;
}
.tool svg {
  display: block;
  width: 14px;
  height: 14px;
  margin: 0 auto;
}
.more::after {
  content: "";
  position: absolute;
  right: -2px;
  bottom: -1px;
  border: 2px solid transparent;
  border-top: 3px solid #111;
  border-bottom: 0;
}
.top {
  height: 24px;
  padding-left: 4px;
  border-top: 2px solid #fafaff;
  border-bottom: 2px solid #8c8ca0;
}

/* work area */
.work {
  flex: 1;
  display: flex;
  min-height: 0;
}
.viewport {
  position: relative;
  flex: 1;
  min-width: 0;
  overflow: hidden;
  background: linear-gradient(#333366, #36366a 35%, #414172 52%, #60608a 74%, #9c9cb6);
}
.scene {
  display: block;
  width: 100%;
  height: 100%;
}
.scene text {
  font-size: 9px;
}
.axis {
  fill: #f0f0ff;
}
.compass {
  fill: #e0d68a;
}
.tree,
.tree ul {
  margin: 0;
  padding: 0;
  list-style: none;
  line-height: 13px;
}
.tree {
  position: absolute;
  left: 1px;
  top: 4px;
  color: #f4f4ff;
}
.tree span {
  display: inline-block;
  vertical-align: top;
}
.tree svg {
  width: 12px;
  height: 12px;
  vertical-align: top;
}
.tree .leaf svg,
.tree .node svg {
  margin: 0 0 0 6px;
}
.tree ul {
  margin-left: 3px;
}
.tree ul ul {
  margin-left: 9px;
}
.tree ul li {
  position: relative;
  border-left: 1px solid #f4f4ff;
}
.tree ul li:last-child {
  border-color: transparent;
}
.tree ul li::before {
  content: "";
  position: absolute;
  left: -1px;
  top: 0;
  width: 6px;
  height: 7px;
  border-left: 1px solid #f4f4ff;
  border-bottom: 1px solid #f4f4ff;
}
.tree .node::after {
  content: "";
  position: absolute;
  left: -3px;
  top: 4px;
  width: 5px;
  height: 5px;
  border: 1px solid #f4f4ff;
  border-radius: 50%;
  background: #222240;
}
.tree .current {
  text-decoration: underline;
}

/* side toolbars */
.side {
  display: flex;
  gap: 8px;
  padding: 0 0 0 2px;
  border-left: 2px solid #fafaff;
  background: #cfcfe6;
}
.column {
  display: flex;
  flex-direction: column;
  padding-top: 12px;
}
.column.high {
  padding-top: 3px;
}
.column .group {
  display: flex;
  flex-direction: column;
  padding-top: 5px;
  background: linear-gradient(#fff, #fff) 0 0 / 12px 1px no-repeat;
}
.column .gap-xs { margin-top: 1px; }
.column .gap-s { margin-top: 8px; }
.column .gap-m { margin-top: 12px; }
.column .gap-l { margin-top: 16px; }
.column .gap-xl { margin-top: 54px; }
.toolbar .gap-s { margin-left: 8px; }
.toolbar .gap-m { margin-left: 12px; }
.toolbar .gap-xl { margin-left: 26px; }

/* bottom toolbars */
.bottom {
  border-top: 2px solid #fafaff;
  border-bottom: 2px solid #8c8ca0;
}
.view {
  height: 22px;
  padding-left: 74px;
}
.standard {
  height: 24px;
  padding-left: 4px;
  padding-top: 4px;
}
.fx {
  font-family: "Liberation Sans", sans-serif;
  font-size: 7px;
  font-weight: 700;
}
.fx i {
  font-family: "Liberation Serif", serif;
  font-size: 12px;
}
.num {
  font-family: "Liberation Sans", sans-serif;
  font-size: 7px;
  line-height: 7px;
  font-weight: 700;
}
.logo {
  width: 30px;
  height: 22px;
  margin-left: auto;
}
.logo text {
  font: italic 700 7px "Liberation Sans", sans-serif;
  fill: #29297e;
}
.standard select {
  appearance: none;
  width: 104px;
  height: 14px;
  margin-left: 2px;
  padding: 0 2px;
  border: 1px solid #77778c;
  border-radius: 0;
  font: inherit;
  color: #111;
  background:
    linear-gradient(45deg, transparent 50%, #111 50%) right 6px top 5px / 3px 3px no-repeat,
    linear-gradient(-45deg, transparent 50%, #111 50%) right 3px top 5px / 3px 3px no-repeat,
    linear-gradient(#d5d5e6, #d5d5e6) right 0 top 0 / 11px 12px no-repeat,
    #fff;
}

/* status line */
.status {
  display: flex;
  align-items: center;
  gap: 2px;
  height: 15px;
  padding-left: 1px;
  background: linear-gradient(#d0d0e8, #c4cfe8);
}
.status label {
  flex: 3;
}
.status input {
  flex: 1;
  min-width: 0;
  height: 12px;
  padding: 0 2px;
  border: 1px solid #77778c;
  border-right-color: #fff;
  border-bottom-color: #fff;
  font: inherit;
  background: #fff;
}
.status button {
  width: 19px;
  height: 12px;
  border: 1px solid #f4f4ff;
  border-right-color: #9090a8;
  border-bottom-color: #9090a8;
  background: #cfcfe4;
}
.status svg {
  display: block;
  width: 16px;
  height: 10px;
  margin: 0 auto;
}
```
